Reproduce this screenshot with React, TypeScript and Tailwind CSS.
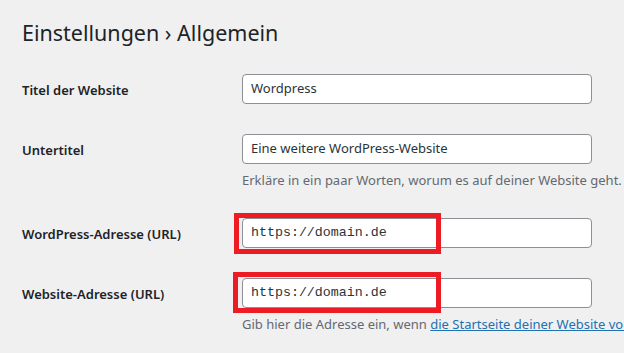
import React from "react";

const sans = "font-['Segoe_UI','Noto_Sans',sans-serif]";

function Row({
  label,
  children,
  top,
}: {
  label: string;
  children: React.ReactNode;
  top: string;
}) {
  return (
    <div className={`flex ${top}`}>
      <div className="w-[220px] shrink-0 pt-[6px] text-[13px] leading-[20px] font-semibold text-[#1d2327]">
        {label}
      </div>
      <div className="flex flex-col">{children}</div>
    </div>
  );
}

function Input({ value, mono }: { value: string; mono?: boolean }) {
  return (
    <div
      className={`h-[30px] w-[350px] rounded-[4px] border border-[#8c8f94] bg-white pl-[8px] flex items-center text-[#2c3338] ${
        mono
          ? "font-['Liberation_Mono',monospace] text-[13.3px]"
          : "text-[13px]"
      }`}
    >
      {value}
    </div>
  );
}

export default function App() {
  return (
    <div
      className={`w-[624px] h-[353px] overflow-hidden bg-[#f0f0f1] pl-[22px] whitespace-nowrap ${sans}`}
    >
      <h1 className="pt-[18px] text-[21.5px] leading-[30px] font-normal text-[#1d2327]">
        Einstellungen › Allgemein
      </h1>
      <Row label="Titel der Website" top="mt-[26px]">
        <Input value="Wordpress" />
      </Row>
      <Row label="Untertitel" top="mt-[30px]">
        <Input value="Eine weitere WordPress-Website" />
        <p className="mt-[6px] text-[13px] leading-[20px] text-[#646970]">
          Erkläre in ein paar Worten, worum es auf deiner Website geht.
        </p>
      </Row>
      <Row label="WordPress-Adresse (URL)" top="mt-[28px]">
        <div className="relative">
          <Input value="https://domain.de" mono />
          <div className="absolute left-[-8px] top-[-5px] w-[207px] h-[41px] border-[5px] border-[#ed1c24]" />
        </div>
      </Row>
      <Row label="Website-Adresse (URL)" top="mt-[30px]">
        <div className="relative">
          <Input value="https://domain.de" mono />
          <div className="absolute left-[-9px] top-[-6px] w-[208px] h-[41px] border-[5px] border-[#ed1c24]" />
        </div>
        <p className="mt-[6px] text-[13px] leading-[20px] text-[#646970]">
          Gib hier die Adresse ein, wenn{" "}
          <span className="text-[#2271b1] underline">
            die Startseite deiner Website vom WordPress-Installationsverzeichnis abweichen soll
          </span>
          .
        </p>
      </Row>
    </div>
  );
}
